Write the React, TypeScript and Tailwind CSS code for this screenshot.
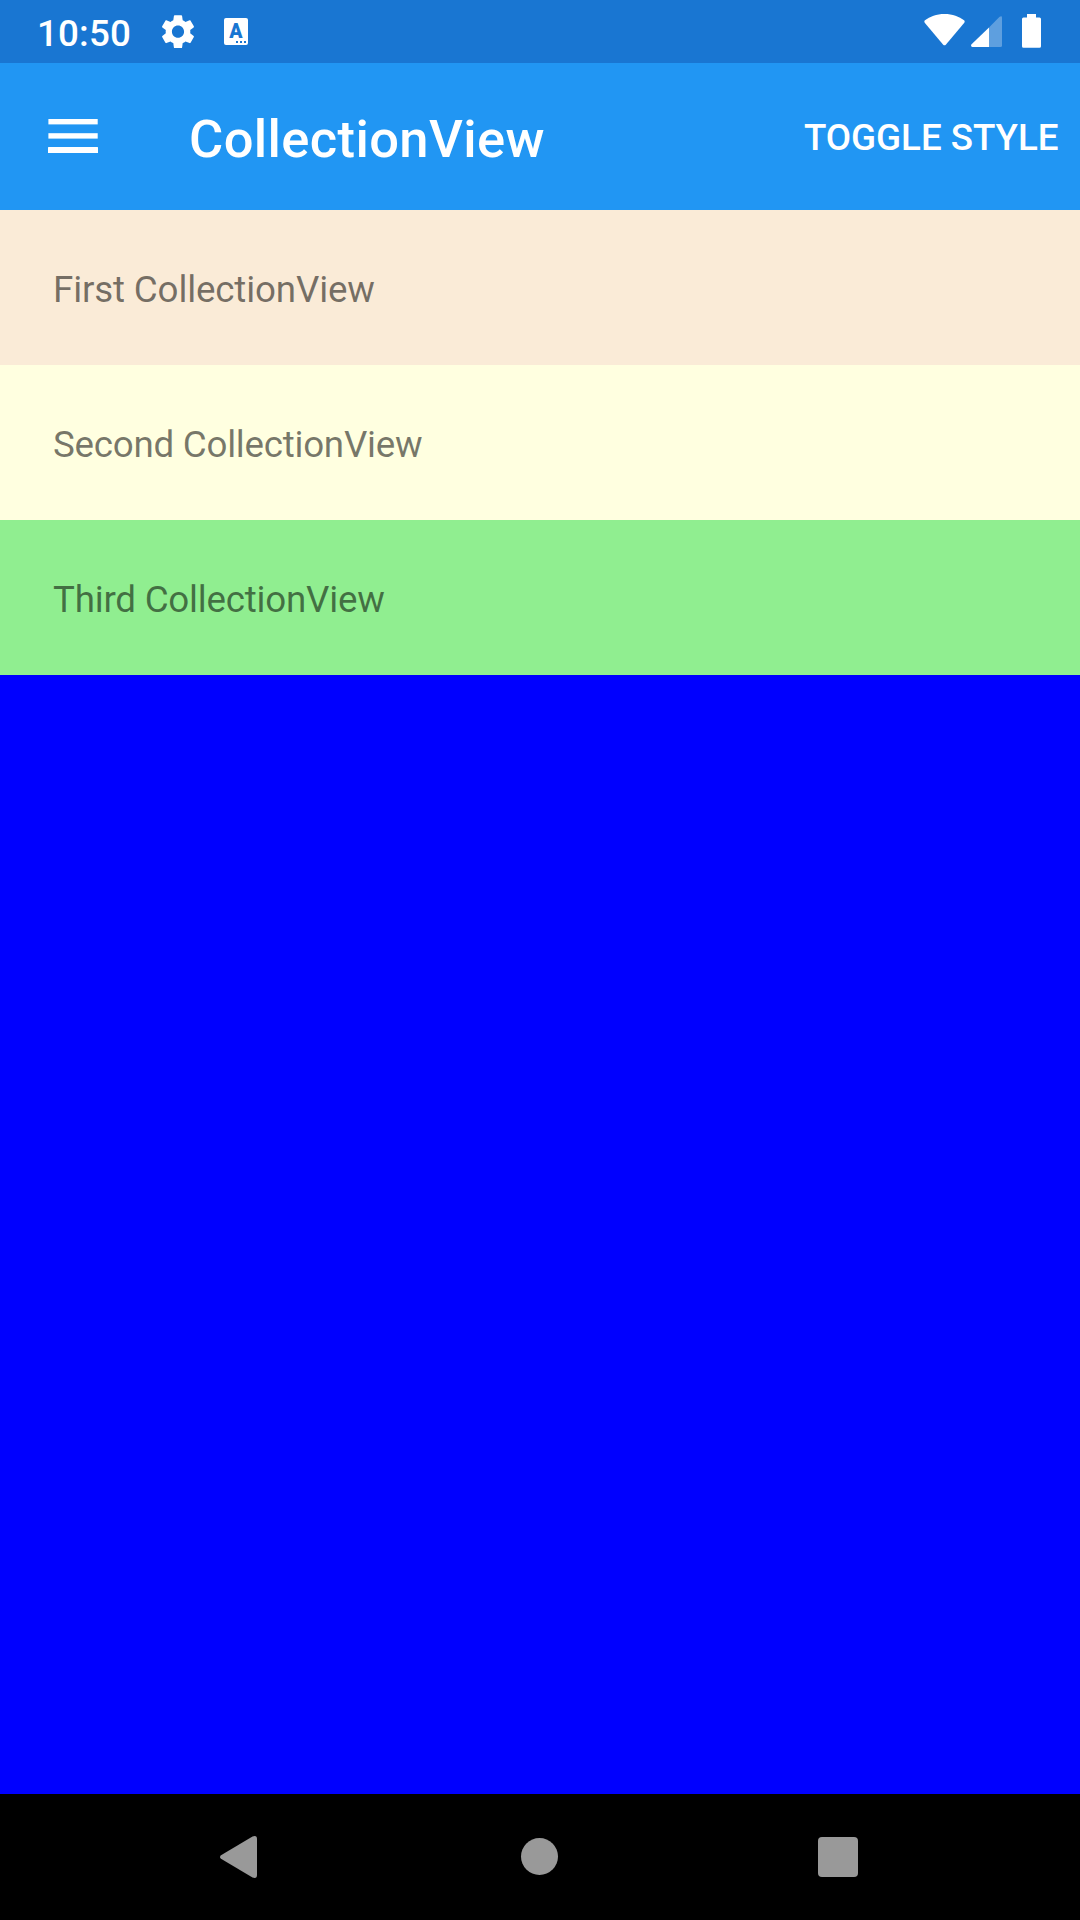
import React from "react";

const rows = [
  { label: "First CollectionView", color: "bg-[#FAEBD7] tracking-[-0.16px]" },
  { label: "Second CollectionView", color: "bg-[#FFFFE0] tracking-[-0.26px]" },
  { label: "Third CollectionView", color: "bg-[#90EE90] tracking-[-0.23px]" },
];

function StatusBar() {
  return (
    <div className="flex h-[63px] items-start justify-between bg-[#1976D2] pl-[37px] pr-[39px] text-white">
      <div className="flex items-start">
        <span className="mt-[12px] w-[94px] whitespace-nowrap text-[36.75px] leading-[43px] font-medium tracking-[0.15px]">10:50</span>
        <svg className="mt-[12px] ml-[27px] h-[39.4px] w-[40px]" viewBox="0 0 24 24" fill="currentColor">
          <path d="M19.43 12.98c.04-.32.07-.64.07-.98s-.03-.66-.07-.98l2.11-1.65c.19-.15.24-.42.12-.64l-2-3.46c-.12-.22-.39-.3-.61-.22l-2.49 1c-.52-.4-1.08-.73-1.69-.98l-.38-2.65C14.46 2.18 14.25 2 14 2h-4c-.25 0-.46.18-.49.42l-.38 2.65c-.61.25-1.17.59-1.69.98l-2.49-1c-.23-.09-.49 0-.61.22l-2 3.46c-.13.22-.07.49.12.64l2.11 1.65c-.04.32-.07.65-.07.98s.03.66.07.98l-2.11 1.65c-.19.15-.24.42-.12.64l2 3.46c.12.22.39.3.61.22l2.49-1c.52.4 1.08.73 1.69.98l.38 2.65c.03.24.24.42.49.42h4c.25 0 .46-.18.49-.42l.38-2.65c.61-.25 1.17-.59 1.69-.98l2.49 1c.23.09.49 0 .61-.22l2-3.46c.12-.22.07-.49-.12-.64l-2.11-1.65zM12 15.7c-2.04 0-3.7-1.66-3.7-3.7s1.66-3.7 3.7-3.7 3.7 1.66 3.7 3.7-1.66 3.7-3.7 3.7z" />
        </svg>
        <div className="mt-[18px] ml-[26px] flex h-[27px] w-[24px] flex-col items-center rounded-[2px] bg-white text-[#1976D2]">
          <span className="mt-[2px] h-[21px] text-[19.5px] leading-[23px] font-black">A</span>
          <span className="flex gap-[2px] self-end pr-[2px]">
            <i className="size-[2px] bg-[#1976D2]" />
            <i className="size-[2px] bg-[#1976D2]" />
            <i className="size-[2px] bg-[#1976D2]" />
          </span>
        </div>
      </div>
      <div className="flex items-start">
        <svg className="mt-[14px] h-[32px] w-[41px]" viewBox="0 0 41 32" fill="currentColor">
          <path d="M20.5 0C12.5 0 5.8 2.6 1 6.3Q-.2 7.3.7 8.7L19.2 30.7Q20.5 32 21.8 30.7L40.3 8.7Q41.2 7.3 40 6.3C35.2 2.6 28.5 0 20.5 0Z" />
        </svg>
        <svg className="mt-[16px] ml-[6px] h-[31px] w-[31px]" viewBox="0 0 31 31" fill="currentColor">
          <path fillOpacity=".3" d="M18 11.5 28.6.7Q31-.7 31 1.5V29.5Q31 31 29.5 31H18Z" />
          <path d="M18 11.5V31H1.3Q-.5 30.6.3 28.6Z" />
        </svg>
        <svg className="mt-[14px] ml-[20px] h-[34px] w-[19px]" viewBox="0 0 19 34" fill="currentColor">
          <path d="M5 0H14V3.5H17.5Q19 3.5 19 5V32.3Q19 33.8 17.5 33.8H1.5Q0 33.8 0 32.3V5Q0 3.5 1.5 3.5H5Z" />
        </svg>
      </div>
    </div>
  );
}

function AppBar() {
  return (
    <header className="flex h-[147px] items-start bg-[#2196F3] pr-[21.5px] pl-[48px] font-medium text-white">
      <button className="mt-[56px] h-[34px] w-[50px]" aria-label="Menu">
        <svg className="block h-[34px] w-[50px]" viewBox="0 0 50 34" fill="currentColor">
          <rect x=".4" width="49.3" height="5.4" />
          <rect x=".4" y="14.2" width="49.3" height="5.4" />
          <rect y="28" width="50" height="6" rx=".5" />
        </svg>
      </button>
      <h1 className="mt-[45px] ml-[91px] grow text-[52.5px] leading-[62px] tracking-[0.37px]">CollectionView</h1>
      <button className="mt-[53px] text-[36.75px] leading-[43px] tracking-[-0.04px] whitespace-nowrap">TOGGLE STYLE</button>
    </header>
  );
}

function NavBar() {
  return (
    <nav className="flex h-[126px] items-start bg-black pl-[220px] text-[#999999]">
      <svg className="mt-[42px] h-[42px] w-[37px]" viewBox="0 0 37 42" fill="currentColor">
        <path d="M1 19.2 32.5.5Q37-1.2 37 3V39Q37 43.2 32.5 41.5L1 22.8Q-1 21 1 19.2Z" />
      </svg>
      <div className="mt-[44px] ml-[264px] size-[37px] rounded-full bg-[#999999]" />
      <div className="mt-[43px] ml-[260px] size-[40px] rounded-[4px] bg-[#999999]" />
    </nav>
  );
}

export default function App() {
  return (
    <div className="flex h-[1920px] w-[1080px] flex-col overflow-hidden font-['Roboto',sans-serif]">
      <StatusBar />
      <AppBar />
      <main className="grow bg-[#0000FF]">
        {rows.map((row) => (
          <div key={row.label} className={`h-[155px] pt-[58px] pl-[53px] text-[36.75px] leading-[43px] text-black/54 ${row.color}`}>
            {row.label}
          </div>
        ))}
      </main>
      <NavBar />
    </div>
  );
}
